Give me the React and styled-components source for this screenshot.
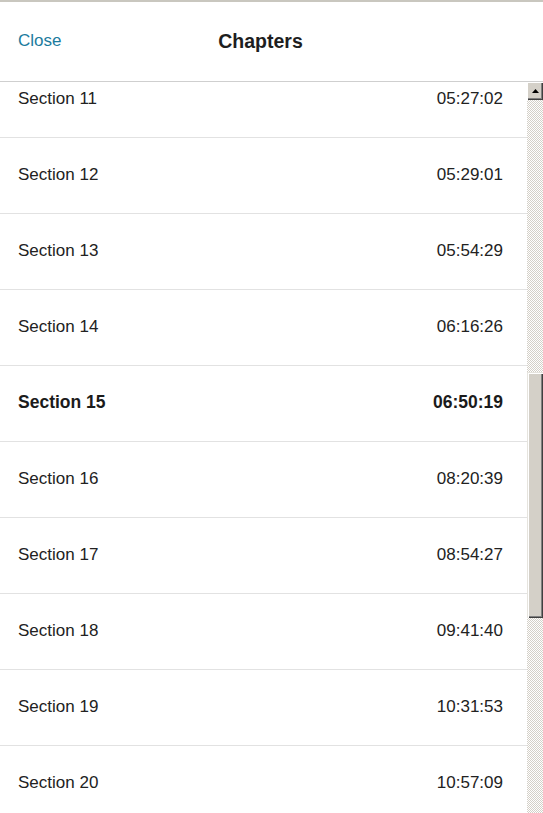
import { useEffect, useRef } from "react";
import styled, { createGlobalStyle } from "styled-components";

const chapters = [
  ["Section 11", "05:27:02"],
  ["Section 12", "05:29:01"],
  ["Section 13", "05:54:29"],
  ["Section 14", "06:16:26"],
  ["Section 15", "06:50:19"],
  ["Section 16", "08:20:39"],
  ["Section 17", "08:54:27"],
  ["Section 18", "09:41:40"],
  ["Section 19", "10:31:53"],
  ["Section 20", "10:57:09"],
];

const current = "Section 15";

// where the list is scrolled to, and where the thumb sits in the track
const scrollOffset = 20;
const thumbTop = 272;
const thumbHeight = 246;

export default function App() {
  const listRef = useRef(null);

  useEffect(() => {
    if (listRef.current) listRef.current.scrollTop = scrollOffset;
  }, []);

  return (
    <>
      <GlobalStyle />
      <Wrapper>
        <Header>
          <CloseLink href="#">Close</CloseLink>
          <Title>Chapters</Title>
          <Spacer />
        </Header>
        <Body>
          <List ref={listRef}>
            {chapters.map(([name, time]) => (
              <Row key={name} $active={name === current}>
                <span>{name}</span>
                <span>{time}</span>
              </Row>
            ))}
          </List>
          <ScrollBar>
            <ArrowButton>
              <svg width="7" height="4" viewBox="0 0 7 4">
                <path d="M0 4h7L3.5 0z" fill="#000" />
              </svg>
            </ArrowButton>
            <Track>
              <Thumb style={{ marginTop: thumbTop, height: thumbHeight }} />
            </Track>
          </ScrollBar>
        </Body>
      </Wrapper>
    </>
  );
}

const GlobalStyle = createGlobalStyle`
  html, body {
    margin: 0;
    padding: 0;
    height: 100%;
    overflow: hidden;
    background: #fff;
  }
  body {
    font-family: "Liberation Sans", Arial, sans-serif;
    color: #222;
  }
`;

const Wrapper = styled.div`
  display: flex;
  flex-direction: column;
  height: 100vh;
  border-top: 2px solid #c9c7bf;
  box-sizing: border-box;
`;

const Header = styled.div`
  display: flex;
  align-items: center;
  flex-shrink: 0;
  height: 80px;
  padding: 0 18px;
  border-bottom: 1px solid #cfcfcf;
  box-sizing: border-box;
`;

const CloseLink = styled.a`
  width: 70px;
  font-size: 17px;
  color: #1b7b9e;
  text-decoration: none;
  margin-top: -2px;
`;

const Title = styled.h1`
  flex: 1;
  margin: 0 0 0 -22px;
  text-align: center;
  font-size: 19.5px;
  font-weight: bold;
  color: #1e1e1e;
`;

const Spacer = styled.div`
  width: 70px;
`;

const Body = styled.div`
  display: flex;
  flex: 1;
  min-height: 0;
`;

const List = styled.div`
  flex: 1;
  overflow: hidden;
`;

const Row = styled.div`
  display: flex;
  justify-content: space-between;
  align-items: center;
  height: 76px;
  padding: 0 24px 2px 18px;
  border-bottom: 1px solid #e2e2e2;
  box-sizing: border-box;
  font-size: ${(p) => (p.$active ? "17.5px" : "17px")};
  font-weight: ${(p) => (p.$active ? "bold" : "normal")};
  color: ${(p) => (p.$active ? "#1b1b1b" : "#222")};
`;

const ScrollBar = styled.div`
  display: flex;
  flex-direction: column;
  width: 16px;
  flex-shrink: 0;
`;

const ArrowButton = styled.div`
  display: flex;
  align-items: center;
  justify-content: center;
  height: 18px;
  flex-shrink: 0;
  background: #d4d0c8;
  box-sizing: border-box;
  box-shadow: inset 1px 1px 0 #ffffff, inset -1px -1px 0 #404040,
    inset -2px -2px 0 #808080;
  padding-bottom: 1px;
`;

const Track = styled.div`
  flex: 1;
  background-color: #f4f3ef;
  background-image: repeating-conic-gradient(#d4d0c8 0 25%, #ffffff 0 50%);
  background-size: 2px 2px;
`;

const Thumb = styled.div`
  background: #d4d0c8;
  box-sizing: border-box;
  box-shadow: inset 1px 1px 0 #e6e4de, inset 2px 2px 0 #ffffff,
    inset -1px -1px 0 #404040, inset -2px -2px 0 #808080;
`;
